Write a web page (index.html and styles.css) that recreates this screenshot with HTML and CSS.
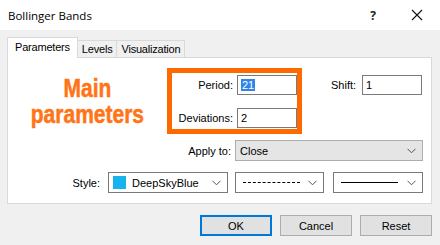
FILE: index.html
```html
<!DOCTYPE html>
<html lang="en">
<head>
    <meta charset="UTF-8">
    <title>Bollinger Bands</title>
    <link rel="stylesheet" href="styles.css">
</head>
<body>

<div class="dialog">
    <!-- Title bar -->
    <div class="titlebar">
        <span class="title">Bollinger Bands</span>
        <span class="help">?</span>
        <svg class="close" width="12" height="12" viewBox="0 0 12 12">
            <path d="M1 1 L11 11 M11 1 L1 11" stroke="#111" stroke-width="1.1" fill="none"/>
        </svg>
    </div>

    <div class="body">
        <!-- Tabs -->
        <div class="tabs">
            <div class="tab active">Parameters</div>
            <div class="tab">Levels</div>
            <div class="tab">Visualization</div>
        </div>

        <div class="panel">
            <div class="top-row">
                <div class="note"><span class="note-text">Main<br>parameters</span></div>

                <div class="highlight">
                    <label class="lbl">Period:</label>
                    <div class="field"><span class="sel">21</span></div>
                    <label class="lbl">Deviations:</label>
                    <div class="field">2</div>
                </div>

                <div class="shift">
                    <label class="lbl">Shift:</label>
                    <div class="field">1</div>
                </div>
            </div>

            <div class="apply-row">
                <label class="lbl apply-lbl">Apply to:</label>
                <div class="combo gray wide">
                    <span>Close</span>
                    <svg class="chev" width="9" height="6" viewBox="0 0 9 6"><path d="M0.5 0.8 L4.5 4.8 L8.5 0.8" stroke="#555" fill="none"/></svg>
                </div>
            </div>

            <div class="style-row">
                <label class="lbl style-lbl">Style:</label>
                <div class="combo color">
                    <span class="swatch"></span>
                    <span>DeepSkyBlue</span>
                    <svg class="chev" width="9" height="6" viewBox="0 0 9 6"><path d="M0.5 0.8 L4.5 4.8 L8.5 0.8" stroke="#555" fill="none"/></svg>
                </div>
                <div class="combo line-combo">
                    <span class="line dashed"></span>
                    <svg class="chev" width="9" height="6" viewBox="0 0 9 6"><path d="M0.5 0.8 L4.5 4.8 L8.5 0.8" stroke="#555" fill="none"/></svg>
                </div>
                <div class="combo line-combo width-combo">
                    <span class="line solid"></span>
                    <svg class="chev" width="9" height="6" viewBox="0 0 9 6"><path d="M0.5 0.8 L4.5 4.8 L8.5 0.8" stroke="#555" fill="none"/></svg>
                </div>
            </div>
        </div>

        <!-- Buttons -->
        <div class="buttons">
            <button class="btn default">OK</button>
            <button class="btn">Cancel</button>
            <button class="btn">Reset</button>
        </div>
    </div>
</div>

</body>
</html>
```

FILE: styles.css
```css
body {
    margin: 0;
    padding: 0;
    font-family: "Liberation Sans", Arial, sans-serif;
    font-size: 11px;
    color: #000;
    background: #f0f0f0;
}

.dialog {
    width: 440px;
    height: 245px;
    background-color: #f0f0f0;
    overflow: hidden;
}

/* title bar */
.titlebar {
    height: 30px;
    background-color: #fff;
    display: flex;
    align-items: center;
    padding-left: 8px;
}

.title {
    font-family: "Open Sans", "Noto Sans", sans-serif;
    font-size: 11.5px;
    color: #000;
    flex: 1;
}

.help {
    font-family: "Open Sans", sans-serif;
    font-size: 12px;
    font-weight: bold;
    color: #222;
    margin-right: 35px;
}

.close {
    margin-right: 17px;
}

.body {
    padding: 7px 8px 0 7px;
}

/* tabs */
.tabs {
    display: flex;
    align-items: flex-end;
    height: 20px;
    position: relative;
    z-index: 1;
}

.tab {
    height: 17px;
    line-height: 16px;
    padding: 0 4px;
    border: 1px solid #d9d9d9;
    border-bottom: none;
    border-left: none;
    background-color: #f0f0f0;
    box-sizing: border-box;
    letter-spacing: -0.2px;
}

.tab.active {
    height: 21px;
    line-height: 19px;
    margin-bottom: -1px;
    padding: 0 7px 0 7px;
    border-left: 1px solid #d9d9d9;
    background-color: #fff;
}

.panel {
    background-color: #fff;
    border: 1px solid #d9d9d9;
    height: 147px;
    padding-top: 10px;
    box-sizing: border-box;
}

/* generic field + labels */
.lbl {
    color: #000;
}

.field {
    width: 60px;
    height: 20px;
    border: 1px solid #7a7a7a;
    box-sizing: border-box;
    background: #fff;
    padding: 2px 0 0 3px;
    line-height: 14px;
}

.sel {
    background-color: #2f86e8;
    color: #fff;
    padding: 0 1px;
}

.top-row {
    display: flex;
    height: 66px;
}

.note {
    width: 159px;
    display: flex;
    justify-content: center;
    padding-top: 7px;
    box-sizing: border-box;
}

.note-text {
    display: inline-block;
    text-align: center;
    color: #ff7417;
    font-family: "Liberation Sans", Arial, sans-serif;
    font-weight: bold;
    font-size: 25px;
    line-height: 26px;
    transform: scaleX(0.84);
    -webkit-text-stroke: 0.5px #ff7417;
    white-space: nowrap;
}

.highlight {
    width: 135px;
    height: 66px;
    border: 5px solid #ff6a00;
    box-sizing: border-box;
    display: grid;
    grid-template-columns: 59px 60px;
    grid-template-rows: 20px 20px;
    column-gap: 4px;
    row-gap: 13px;
    align-items: center;
    padding-top: 2px;
    padding-left: 2px;
}

.highlight .lbl {
    text-align: right;
}

.shift {
    display: flex;
    align-items: center;
    height: 20px;
    margin-top: 7px;
    margin-left: 29px;
    gap: 6px;
}

/* combos */
.combo {
    height: 21px;
    border: 1px solid #7a7a7a;
    box-sizing: border-box;
    display: flex;
    align-items: center;
    padding-left: 4px;
    padding-right: 6px;
    background-color: #fff;
}

.combo .chev {
    margin-left: auto;
}

.combo.gray {
    background-color: #e5e5e5;
    border-color: #adadad;
}

.apply-row {
    display: flex;
    align-items: center;
    margin-top: 6px;
}

.apply-lbl {
    width: 223px;
    text-align: right;
    margin-right: 4px;
}

.wide {
    width: 188px;
}

.style-row {
    display: flex;
    align-items: center;
    margin-top: 11px;
}

.style-lbl {
    width: 92px;
    text-align: right;
    margin-right: 8px;
}

.combo.color {
    width: 120px;
    gap: 6px;
}

.swatch {
    width: 13px;
    height: 13px;
    background-color: #17b3ee;
    display: inline-block;
}

.line-combo {
    width: 89px;
    margin-left: 7px;
}

.width-combo {
    width: 90px;
    margin-left: 9px;
}

.line {
    display: inline-block;
    width: 57px;
    margin-left: 3px;
}

.line.dashed {
    border-top: 1px dashed #000;
}

.line.solid {
    border-top: 1px solid #000;
}

/* buttons */
.buttons {
    display: flex;
    justify-content: flex-end;
    gap: 8px;
    margin-top: 11px;
}

.btn {
    width: 72px;
    height: 21px;
    background-color: #e1e1e1;
    border: 1px solid #adadad;
    font-family: "Liberation Sans", Arial, sans-serif;
    font-size: 11px;
    color: #000;
    padding: 0;
}

.btn.default {
    border: 2px solid #0078d7;
}
```
